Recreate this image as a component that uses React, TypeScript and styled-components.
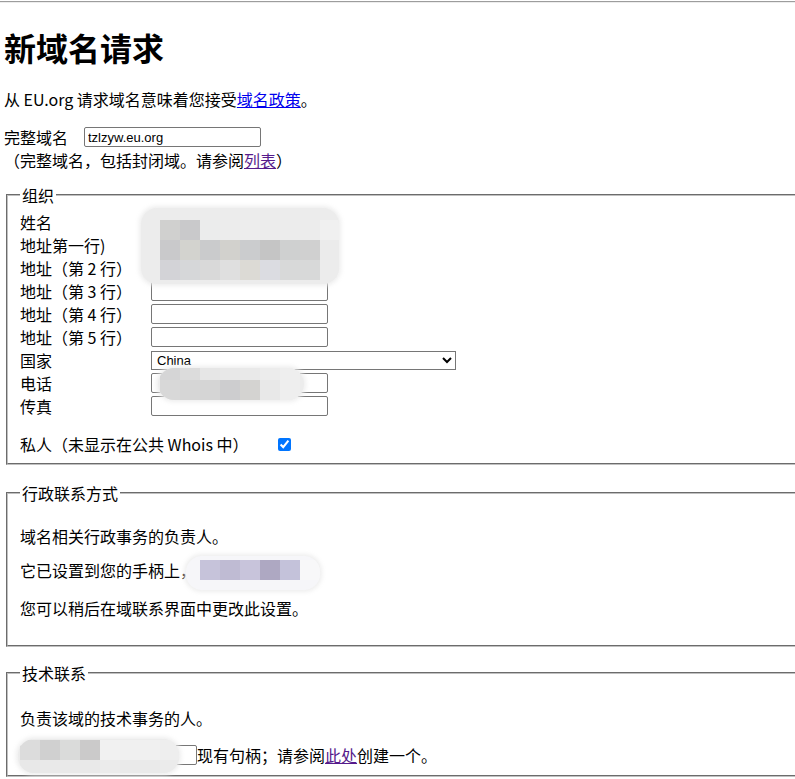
import { Fragment } from "react";
import styled, { createGlobalStyle } from "styled-components";

const GlobalStyle = createGlobalStyle`
  html, body {
    margin: 0;
    padding: 0;
    background: #fff;
    overflow: hidden;
  }
  body {
    font-family: "Noto Sans CJK SC", "Liberation Sans", sans-serif;
    font-size: 16px;
    color: #000;
  }
`;

const Page = styled.div`
  position: relative;
  width: 826px;
  padding: 1px 0 0 4px;
`;

const Rule = styled.hr`
  margin: 0 0 0 -4px;
  height: 0;
  border: 0;
  border-top: 1px solid #9d9d9d;
  border-bottom: 1px solid #ededed;
`;

const Title = styled.h1`
  margin: 24px 0 0;
  font-size: 32px;
  line-height: 40px;
  font-weight: 700;
`;

const Para = styled.p<{ $top?: number; $lh?: number }>`
  margin: ${({ $top }) => $top ?? 0}px 0 0;
  line-height: ${({ $lh }) => $lh ?? 20}px;
`;

const Link = styled.a<{ $visited?: boolean }>`
  color: ${({ $visited }) => ($visited ? "#551a8b" : "#0000ee")};
  text-decoration: underline;
`;

const NameRow = styled.div`
  display: flex;
  align-items: center;
  height: 22px;
  margin-top: 17px;
  span {
    width: 80px;
  }
`;

const TextInput = styled.input<{ $w?: number }>`
  box-sizing: border-box;
  width: ${({ $w }) => $w ?? 177}px;
  height: 20px;
  margin: 0;
  padding: 1px 3px;
  border: 1px solid #767676;
  border-radius: 2px;
  font-family: "Liberation Sans", Arial, sans-serif;
  font-size: 13px;
  color: #000;
  background: #fff;
`;

const Select = styled.select`
  box-sizing: border-box;
  width: 305px;
  height: 19px;
  margin: 2px 0 0;
  padding: 0 0 0 1px;
  border: 1px solid #767676;
  border-radius: 0;
  font-family: "Liberation Sans", Arial, sans-serif;
  font-size: 13px;
  color: #000;
  background: #fff;
`;

const Group = styled.fieldset<{ $top: number; $bottom: number }>`
  margin: ${({ $top }) => $top}px 2px 0;
  padding: 5px 12px ${({ $bottom }) => $bottom}px;
  border: 2px groove rgb(192, 192, 192);
`;

const Legend = styled.legend`
  padding: 0 2px;
  font-size: 16px;
  line-height: 20px;
`;

const FieldGrid = styled.div`
  display: grid;
  grid-template-columns: 131px auto;
  grid-auto-rows: 23px;
  align-items: center;
  justify-items: start;
`;

const CheckRow = styled.div`
  display: flex;
  align-items: center;
  height: 22px;
  margin-top: 16px;
  span {
    width: 258px;
  }
  input {
    width: 13px;
    height: 13px;
    margin: 0;
    accent-color: #0075ff;
  }
`;

const HandleRow = styled.div`
  display: flex;
  align-items: center;
  height: 22px;
  margin-top: 16px;
`;

const Blob = styled.div<{ $x: number; $y: number; $w: number; $h: number; $tint?: string }>`
  position: absolute;
  left: ${({ $x }) => $x}px;
  top: ${({ $y }) => $y}px;
  width: ${({ $w }) => $w}px;
  height: ${({ $h }) => $h}px;
  border-radius: 16px;
  background: ${({ $tint }) => $tint ?? "#ececec"};
  box-shadow: 0 0 4px 2px rgba(236, 236, 236, 0.9);
  overflow: hidden;
`;

const Cells = styled.div<{ $x: number; $y: number; $cols: number }>`
  position: absolute;
  left: ${({ $x }) => $x}px;
  top: ${({ $y }) => $y}px;
  display: grid;
  grid-template-columns: repeat(${({ $cols }) => $cols}, 20px);
  grid-auto-rows: 20px;
`;

const Cell = styled.div<{ $c: string }>`
  background: ${({ $c }) => $c};
`;

type CensorProps = {
  x: number;
  y: number;
  w: number;
  h: number;
  cx: number;
  cy: number;
  rows: string[][];
  tint?: string;
};

// pixelated blur over private data
const Censor = ({ x, y, w, h, cx, cy, rows, tint }: CensorProps) => (
  <Blob $x={x} $y={y} $w={w} $h={h} $tint={tint}>
    <Cells $x={cx - x} $y={cy - y} $cols={rows[0].length}>
      {rows.flat().map((c, i) => (
        <Cell key={i} $c={c} />
      ))}
    </Cells>
  </Blob>
);

const orgRows = [
  "姓名",
  "地址第一行)",
  "地址（第 2 行）",
  "地址（第 3 行）",
  "地址（第 4 行）",
  "地址（第 5 行）",
];

export default function App() {
  return (
    <Page>
      <GlobalStyle />
      <Rule />
      <Title>新域名请求</Title>
      <Para $top={22}>
        从 EU.org 请求域名意味着您接受<Link href="#">域名政策</Link>。
      </Para>
      <NameRow>
        <span>完整域名</span>
        <TextInput defaultValue="tzlzyw.eu.org" />
      </NameRow>
      <Para $top={2}>
        （完整域名，包括封闭域。请参阅<Link href="#" $visited>列表</Link>）
      </Para>

      <Group $top={15} $bottom={8}>
        <Legend>组织</Legend>
        <FieldGrid>
          {orgRows.map((label) => (
            <Fragment key={label}>
              <span>{label}</span>
              <TextInput />
            </Fragment>
          ))}
          <span>国家</span>
          <Select defaultValue="CN">
            <option value="CN">China</option>
          </Select>
          <span>电话</span>
          <TextInput />
          <span>传真</span>
          <TextInput />
        </FieldGrid>
        <CheckRow>
          <span>私人（未显示在公共 Whois 中）</span>
          <input type="checkbox" defaultChecked />
        </CheckRow>
      </Group>

      <Group $top={18} $bottom={27}>
        <Legend>行政联系方式</Legend>
        <Para $top={18}>域名相关行政事务的负责人。</Para>
        <Para $top={12} $lh={24}>
          它已设置到您的手柄上，
        </Para>
        <Para $top={16}>您可以稍后在域联系界面中更改此设置。</Para>
      </Group>

      <Group $top={16} $bottom={9}>
        <Legend>技术联系</Legend>
        <Para $top={20}>负责该域的技术事务的人。</Para>
        <HandleRow>
          <TextInput />
          现有句柄；请参阅<Link href="#" $visited>此处</Link>创建一个。
        </HandleRow>
      </Group>

      <Censor
        x={141}
        y={208}
        w={198}
        h={76}
        cx={160}
        cy={220}
        rows={[
          ["#d0d0cf", "#c9c9cb", "#ebecec", "#ececec", "#ededed", "#ececec", "#ececec", "#ececec", "#f0f0f0"],
          ["#c9c9cb", "#d3d3cf", "#cacbcc", "#d2d1cd", "#cbccce", "#c5c5c5", "#cfd0d0", "#d0d0d0", "#ebebeb"],
          ["#d3d3d7", "#d6d7d9", "#d9d9d9", "#dfdfdf", "#dcdad5", "#dbdce1", "#d8d9d9", "#d8d9d9", "#ececec"],
        ]}
      />
      <Censor
        x={158}
        y={368}
        w={146}
        h={32}
        cx={160}
        cy={360}
        rows={[
          ["#d5d5d6", "#dcdcdc", "#e6e6e6", "#e8e8e8", "#e9e9e9", "#ececec", "#eeeeee"],
          ["#d8d8d8", "#d6d6d6", "#d5d5d5", "#cdcdcf", "#d4d3d1", "#e8e8e8", "#eeeeee"],
        ]}
      />
      <Censor
        x={186}
        y={556}
        w={134}
        h={34}
        cx={200}
        cy={560}
        tint="#f6f6f9"
        rows={[["#c6c3da", "#bfbbd3", "#c8c4db", "#aea8c2", "#c4c2da", "#f8f8f9"]]}
      />
      <Censor
        x={18}
        y={739}
        w={161}
        h={34}
        cx={20}
        cy={740}
        rows={[
          ["#dcdcdc", "#d0d0d0", "#dadbda", "#cbcaca", "#f1f1f1", "#f0f0f0", "#f0f0f0", "#eeeeee"],
          ["#e8e8e8", "#e9e9e9", "#e9e9e9", "#e9e9e9", "#ebebeb", "#eaeaea", "#eaeaea", "#ebebeb"],
        ]}
      />
    </Page>
  );
}
